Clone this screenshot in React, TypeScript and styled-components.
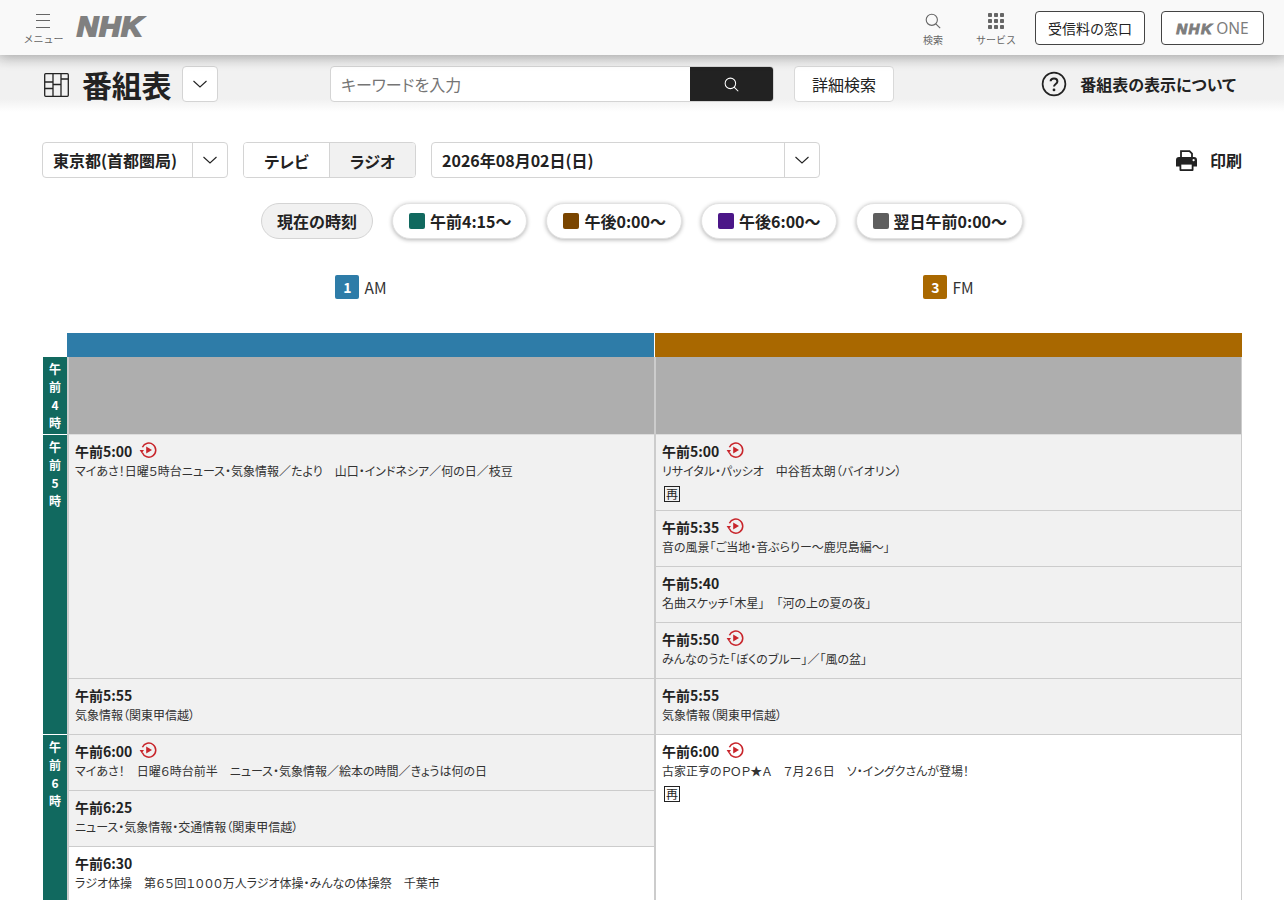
import React from "react";
import styled, { createGlobalStyle } from "styled-components";

const JP = `"Noto Sans CJK JP", "Noto Sans", sans-serif`;

const Global = createGlobalStyle`
  html, body { margin: 0; padding: 0; background: #fff; }
  body { font-family: ${JP}; color: #222; }
  #root { height: 900px; overflow: hidden; }
  * { box-sizing: border-box; }
`;

const Page = styled.div`
  width: 1284px;
  height: 900px;
  overflow: hidden;
  position: relative;
`;

const TopBar = styled.header`
  height: 55px;
  background: #f9f9f9;
  box-shadow: 0 2px 12px rgba(0, 0, 0, 0.28);
  display: flex;
  align-items: flex-start;
  position: relative;
  z-index: 2;
  padding: 0 20px 0 24px;
`;

const MenuBtn = styled.div`
  width: 39px;
  height: 55px;
  display: flex;
  flex-direction: column;
  align-items: center;
  padding-top: 14px;
  color: #666;
  font-size: 10px;
  line-height: 14px;
  white-space: nowrap;
`;

const Burger = styled.span`
  display: block;
  flex: none;
  width: 14px;
  height: 14px;
  margin: 0 1px 4px 0;
  border-top: 1px solid #666;
  border-bottom: 1px solid #666;
  position: relative;
  &::after {
    content: "";
    position: absolute;
    left: 0;
    right: 0;
    top: 5px;
    border-top: 1px solid #666;
  }
`;

const Logo = styled.span`
  font-family: "Liberation Sans", sans-serif;
  font-weight: 700;
  font-style: italic;
  font-size: 27px;
  line-height: 55px;
  letter-spacing: 1px;
  color: #808080;
  -webkit-text-stroke: 2px #808080;
  margin-left: 14px;
  transform: scaleX(1.08);
  transform-origin: left center;
`;

const Spacer = styled.div`
  flex: 1;
`;

const TopIcon = styled.div<{ $w: number; $ml?: number }>`
  width: ${(p) => p.$w}px;
  margin-left: ${(p) => p.$ml ?? 0}px;
  height: 55px;
  display: flex;
  flex-direction: column;
  align-items: center;
  padding-top: 13px;
  font-size: 10px;
  line-height: 14px;
  color: #666;
  svg { display: block; margin-bottom: 4px; }
`;

const OutlineBtn = styled.div<{ $w: number; $ml: number }>`
  width: ${(p) => p.$w}px;
  margin-left: ${(p) => p.$ml}px;
  margin-top: 11px;
  height: 34px;
  border: 1px solid #444;
  border-radius: 4px;
  background: #fff;
  display: flex;
  align-items: center;
  justify-content: center;
  font-size: 14px;
  color: #222;
`;

const OneLogo = styled.span`
  font-family: "Liberation Sans", sans-serif;
  font-weight: 700;
  font-style: italic;
  font-size: 15px;
  color: #7d7d7d;
  -webkit-text-stroke: 1px #7d7d7d;
  margin-right: 3px;
  letter-spacing: 1.5px;
`;

const OneText = styled.span`
  font-family: "Noto Sans", sans-serif;
  font-size: 15.5px;
  color: #7d7d7d;
`;

const TitleBand = styled.div`
  height: 57px;
  background: linear-gradient(#e6e6e6 0, #f1f1f1 14px, #f1f1f1 44px, #fff 57px);
  display: flex;
  align-items: flex-start;
  padding: 11px 48px 0 44px;
`;

const TableMark = styled.div`
  height: 36px;
  padding-top: 2px;
  display: flex;
  align-items: center;
  flex: none;
`;

const TitleText = styled.h1`
  margin: 0 0 0 13px;
  font-size: 30px;
  line-height: 36px;
  font-weight: 700;
  color: #222;
  width: 89px;
  white-space: nowrap;
  letter-spacing: -0.3px;
`;

const SquareDrop = styled.div`
  width: 36px;
  height: 36px;
  margin-left: 11px;
  background: #fff;
  border: 1px solid #d4d4d4;
  border-radius: 4px;
  display: flex;
  align-items: center;
  justify-content: center;
`;

const SearchBox = styled.div`
  width: 444px;
  height: 36px;
  margin-left: 112px;
  display: flex;
  border: 1px solid #d4d4d4;
  border-radius: 4px;
  background: #fff;
  overflow: hidden;
`;

const SearchField = styled.div`
  flex: 1;
  padding-left: 10px;
  font-size: 16px;
  line-height: 35px;
  color: #757575;
  font-feature-settings: "palt";
`;

const SearchBtn = styled.div`
  width: 83px;
  background: #222;
  display: flex;
  align-items: center;
  justify-content: center;
`;

const DetailBtn = styled.div`
  width: 100px;
  height: 36px;
  margin-left: 20px;
  background: #fff;
  border: 1px solid #d9d9d9;
  border-radius: 4px;
  font-size: 16px;
  line-height: 35px;
  text-align: center;
  color: #222;
`;

const HelpLink = styled.div`
  display: flex;
  align-items: center;
  gap: 13px;
  height: 36px;
  font-size: 16px;
  font-weight: 700;
  color: #222;
  white-space: nowrap;
  font-feature-settings: "palt";
`;

const Controls = styled.div`
  display: flex;
  align-items: flex-start;
  padding: 30px 42px 0 42px;
  height: 91px;
`;

const AreaSelect = styled.div`
  width: 186px;
  height: 36px;
  display: flex;
  background: #fff;
  border: 1px solid #d4d4d4;
  border-radius: 4px;
`;

const AreaLabel = styled.div`
  flex: 1;
  padding-left: 10px;
  font-size: 16px;
  font-weight: 700;
  line-height: 34px;
  white-space: nowrap;
  border-right: 1px solid #d4d4d4;
`;

const Caret = styled.div`
  width: 34px;
  display: flex;
  align-items: center;
  justify-content: center;
`;

const Tabs = styled.div`
  width: 173px;
  height: 36px;
  margin-left: 15px;
  display: flex;
  border: 1px solid #d4d4d4;
  border-radius: 4px;
  overflow: hidden;
`;

const Tab = styled.div<{ $on?: boolean }>`
  flex: 1;
  text-align: center;
  font-size: 16px;
  font-weight: 700;
  line-height: 36px;
  font-feature-settings: "palt";
  background: ${(p) => (p.$on ? "#f1f1f1" : "#fff")};
  border-left: ${(p) => (p.$on ? "1px solid #d4d4d4" : "0")};
`;

const DateSelect = styled(AreaSelect)`
  width: 389px;
  margin-left: 15px;
`;

const PrintLink = styled.div`
  display: flex;
  align-items: center;
  gap: 13px;
  height: 36px;
  font-size: 16px;
  font-weight: 700;
  white-space: nowrap;
`;

const Jumps = styled.div`
  display: flex;
  justify-content: center;
  gap: 19px;
  height: 36px;
`;

const Pill = styled.div<{ $flat?: boolean }>`
  height: 36px;
  border-radius: 18px;
  display: flex;
  align-items: center;
  gap: 5px;
  padding: ${(p) => (p.$flat ? "0 15px" : "0 15px 0 16px")};
  font-size: 16px;
  font-weight: 700;
  white-space: nowrap;
  background: ${(p) => (p.$flat ? "#f1f1f1" : "#fff")};
  border: 1px solid ${(p) => (p.$flat ? "#d4d4d4" : "#e2e2e2")};
  box-shadow: ${(p) => (p.$flat ? "none" : "0 1px 4px rgba(0,0,0,.3)")};
`;

const Swatch = styled.span<{ $c: string }>`
  width: 16px;
  height: 16px;
  border-radius: 2px;
  background: ${(p) => p.$c};
`;

const Channels = styled.div`
  display: grid;
  grid-template-columns: 588px 587px;
  margin-left: 67px;
  height: 94px;
  padding-top: 36px;
`;

const ChannelName = styled.div`
  display: flex;
  align-items: flex-start;
  justify-content: center;
  gap: 5px;
  font-size: 15.5px;
  line-height: 24px;
  color: #333;
`;

const ChannelBadge = styled.span<{ $c: string }>`
  width: 24px;
  height: 24px;
  border-radius: 2px;
  background: ${(p) => p.$c};
  color: #fff;
  font-weight: 700;
  font-size: 14px;
  line-height: 24px;
  text-align: center;
`;

const Schedule = styled.div`
  display: grid;
  grid-template-columns: 24px 587px 588px;
  margin-left: 43px;
`;

const HeadSpace = styled.div`
  height: 24px;
`;

const HeadBar = styled.div<{ $c: string; $sep?: boolean }>`
  height: 24px;
  background: ${(p) => p.$c};
  border-left: ${(p) => (p.$sep ? "1px solid #fff" : "0")};
`;

const HourCol = styled.div`
  display: flex;
  flex-direction: column;
`;

const HourCell = styled.div<{ $h: number }>`
  height: ${(p) => p.$h}px;
  margin-bottom: 1px;
  background: #11695f;
  color: #fff;
  font-size: 12px;
  font-weight: 700;
  line-height: 18px;
  text-align: center;
  padding-top: 3px;
  display: flex;
  flex-direction: column;
`;

const ProgCol = styled.div<{ $right?: boolean }>`
  border-left: 2px solid #ccc;
  border-right: ${(p) => (p.$right ? "1px solid #ccc" : "0")};
  display: flex;
  flex-direction: column;
`;

const Blank = styled.div`
  height: 78px;
  flex: none;
  background: #aeaeae;
  border-bottom: 1px solid #ddd;
`;

const Prog = styled.div<{ $h: number; $live?: boolean }>`
  height: ${(p) => p.$h}px;
  flex: none;
  background: ${(p) => (p.$live ? "#fff" : "#f1f1f1")};
  border-bottom: 1px solid #ccc;
  padding: 5px 6px 0 6px;
`;

const ProgTime = styled.div`
  display: flex;
  align-items: center;
  gap: 7px;
  font-size: 14px;
  font-weight: 700;
  line-height: 22px;
  color: #222;
`;

const ProgTitle = styled.div`
  font-size: 12px;
  line-height: 18px;
  color: #333;
  white-space: nowrap;
  font-feature-settings: "palt";
`;

const ReBadge = styled.span`
  display: block;
  width: 16px;
  height: 16px;
  margin: 6px 0 0 2px;
  border: 1px solid #222;
  font-size: 12px;
  line-height: 14px;
  text-align: center;
  color: #222;
`;

const ChevronDown = () => (
  <svg width="16" height="16" viewBox="0 0 16 16" fill="none" stroke="#222" strokeWidth="1.1">
    <path d="M1.5 5 L8 11 L14.5 5" />
  </svg>
);

const Lens = ({ c, s }: { c: string; s: number }) => (
  <svg width={s} height={s} viewBox="0 0 16 16" fill="none" stroke={c} strokeWidth="1.1">
    <circle cx="6.8" cy="6.8" r="5.6" />
    <path d="M10.8 10.8 L15.2 15.2" />
  </svg>
);

const Dots = () => (
  <svg width="16" height="16" viewBox="0 0 16 16" fill="#666">
    {[0, 1, 2].flatMap((r) =>
      [0, 1, 2].map((c) => <rect key={`${r}${c}`} x={c * 6} y={r * 6} width="4" height="4" rx="0.8" />)
    )}
  </svg>
);

const TableIcon = () => (
  <svg width="25" height="24" viewBox="0 0 25 24" fill="none" stroke="#222" strokeWidth="1.3">
    <rect x="0.7" y="0.7" width="23.6" height="22.6" rx="1" />
    <path d="M9 1V23 M17 1V23 M1 9H9 M1 15.5H9 M9 11.5H17 M17 6H24" />
  </svg>
);

const HelpIcon = () => (
  <svg width="26" height="26" viewBox="0 0 26 26">
    <circle cx="13" cy="13" r="11.4" fill="none" stroke="#222" strokeWidth="1.7" />
    <path d="M9.6 10.2 C9.8 6.6 16.4 6.6 16.4 10.4 C16.4 13 13 12.9 13 15.6" fill="none" stroke="#222" strokeWidth="2" />
    <circle cx="13" cy="18.9" r="1.4" fill="#222" />
  </svg>
);

const PrinterIcon = () => (
  <svg width="21" height="21" viewBox="0 0 21 21">
    <path d="M5 7V1.2h8.5L16 3.7V7" fill="#fff" stroke="#222" strokeWidth="1.8" />
    <path d="M3 7h15a3 3 0 0 1 3 3v6.5h-3.5V20a1 1 0 0 1-1 1h-12a1 1 0 0 1-1-1v-3.5H0V10a3 3 0 0 1 3-3z" fill="#222" />
    <rect x="5.3" y="14.6" width="10.4" height="4.6" fill="#fff" />
    <circle cx="17.6" cy="10.2" r="1.1" fill="#fff" />
  </svg>
);

const PlayIcon = () => (
  <svg width="18" height="18" viewBox="0 0 18 18" fill="none" style={{ marginTop: -2 }}>
    <path d="M3.4 6.2 A7 7 0 1 1 3.2 11.6" stroke="#c8252b" strokeWidth="1.5" />
    <path d="M0.6 9 L5 9 L2.8 12.2z" fill="#c8252b" />
    <path d="M7.2 5.6 L13 9 L7.2 12.4z" fill="#c8252b" />
  </svg>
);

type P = { t: string; d?: string; h: number; play?: boolean; re?: boolean; live?: boolean };

const leftProgs: P[] = [
  { t: "午前5:00", d: "マイあさ！日曜５時台ニュース・気象情報／たより　山口・インドネシア／何の日／枝豆", h: 244, play: true },
  { t: "午前5:55", d: "気象情報（関東甲信越）", h: 56 },
  { t: "午前6:00", d: "マイあさ！　日曜６時台前半　ニュース・気象情報／絵本の時間／きょうは何の日", h: 56, play: true },
  { t: "午前6:25", d: "ニュース・気象情報・交通情報（関東甲信越）", h: 56 },
  { t: "午前6:30", d: "ラジオ体操　第６５回１０００万人ラジオ体操・みんなの体操祭　千葉市", h: 56, live: true },
];

const rightProgs: P[] = [
  { t: "午前5:00", d: "リサイタル・パッシオ　中谷哲太朗（バイオリン）", h: 76, play: true, re: true },
  { t: "午前5:35", d: "音の風景「ご当地・音ぶらりー〜鹿児島編〜」", h: 56, play: true },
  { t: "午前5:40", d: "名曲スケッチ「木星」　「河の上の夏の夜」", h: 56 },
  { t: "午前5:50", d: "みんなのうた「ぼくのブルー」／「風の盆」", h: 56, play: true },
  { t: "午前5:55", d: "気象情報（関東甲信越）", h: 56 },
  { t: "午前6:00", d: "古家正亨のＰＯＰ★Ａ　７月２６日　ソ・イングクさんが登場！", h: 170, play: true, re: true, live: true },
];

const hours = [
  { c: ["午", "前", "4", "時"], h: 77 },
  { c: ["午", "前", "5", "時"], h: 299 },
  { c: ["午", "前", "6", "時"], h: 200 },
];

const jumps = [
  { l: "午前4:15〜", c: "#11695f" },
  { l: "午後0:00〜", c: "#7a4500" },
  { l: "午後6:00〜", c: "#4b1688" },
  { l: "翌日午前0:00〜", c: "#5e5e5e" },
];

const Programs = ({ items }: { items: P[] }) => (
  <>
    {items.map((p) => (
      <Prog key={p.t} $h={p.h} $live={p.live}>
        <ProgTime>
          {p.t}
          {p.play && <PlayIcon />}
        </ProgTime>
        <ProgTitle>{p.d}</ProgTitle>
        {p.re && <ReBadge>再</ReBadge>}
      </Prog>
    ))}
  </>
);

export default function App() {
  return (
    <Page>
      <Global />
      <TopBar>
        <MenuBtn>
          <Burger />
          メニュー
        </MenuBtn>
        <Logo>NHK</Logo>
        <Spacer />
        <TopIcon $w={40}>
          <Lens c="#666" s={16} />
          検索
        </TopIcon>
        <TopIcon $w={60} $ml={13}>
          <Dots />
          サービス
        </TopIcon>
        <OutlineBtn $w={110} $ml={9}>受信料の窓口</OutlineBtn>
        <OutlineBtn $w={103} $ml={16}>
          <OneLogo>NHK</OneLogo>
          <OneText>ONE</OneText>
        </OutlineBtn>
      </TopBar>
      <TitleBand>
        <TableMark>
          <TableIcon />
        </TableMark>
        <TitleText>番組表</TitleText>
        <SquareDrop>
          <ChevronDown />
        </SquareDrop>
        <SearchBox>
          <SearchField>キーワードを入力</SearchField>
          <SearchBtn>
            <Lens c="#fff" s={15} />
          </SearchBtn>
        </SearchBox>
        <DetailBtn>詳細検索</DetailBtn>
        <Spacer />
        <HelpLink>
          <HelpIcon />
          番組表の表示について
        </HelpLink>
      </TitleBand>
      <Controls>
        <AreaSelect>
          <AreaLabel>東京都(首都圏局)</AreaLabel>
          <Caret>
            <ChevronDown />
          </Caret>
        </AreaSelect>
        <Tabs>
          <Tab>テレビ</Tab>
          <Tab $on>ラジオ</Tab>
        </Tabs>
        <DateSelect>
          <AreaLabel>2026年08月02日(日)</AreaLabel>
          <Caret>
            <ChevronDown />
          </Caret>
        </DateSelect>
        <Spacer />
        <PrintLink>
          <PrinterIcon />
          印刷
        </PrintLink>
      </Controls>
      <Jumps>
        <Pill $flat>現在の時刻</Pill>
        {jumps.map((j) => (
          <Pill key={j.l}>
            <Swatch $c={j.c} />
            {j.l}
          </Pill>
        ))}
      </Jumps>
      <Channels>
        <ChannelName>
          <ChannelBadge $c="#2e7ca8">1</ChannelBadge>AM
        </ChannelName>
        <ChannelName>
          <ChannelBadge $c="#a96800">3</ChannelBadge>FM
        </ChannelName>
      </Channels>
      <Schedule>
        <HeadSpace />
        <HeadBar $c="#2e7ca8" />
        <HeadBar $c="#a96800" $sep />
        <HourCol>
          {hours.map((h, i) => (
            <HourCell key={i} $h={h.h}>
              {h.c.map((ch) => (
                <span key={ch}>{ch}</span>
              ))}
            </HourCell>
          ))}
        </HourCol>
        <ProgCol>
          <Blank />
          <Programs items={leftProgs} />
        </ProgCol>
        <ProgCol $right>
          <Blank />
          <Programs items={rightProgs} />
        </ProgCol>
      </Schedule>
    </Page>
  );
}
